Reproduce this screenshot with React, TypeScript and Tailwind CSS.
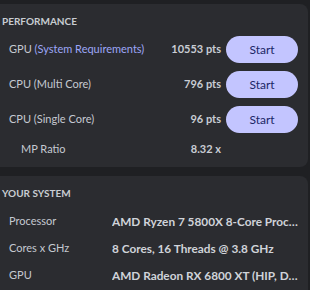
import React from "react";

const font = { fontFamily: "Lato, 'Noto Sans', sans-serif" };

function Btn() {
  return (
    <button className="ml-[5px] flex h-[27px] w-[72px] items-center justify-center rounded-full bg-[#c3c5ff] text-[12px] text-[#1c2766]">
      Start
    </button>
  );
}

function ScoreRow({ children, score }: { children: React.ReactNode; score: string }) {
  return (
    <div className="flex h-[27px] items-center">
      <div className="flex-1 pl-[9px] text-[11px] text-[#c5c9d0]">{children}</div>
      <div className="text-[11px] font-bold text-[#c9cdd4]">{score}</div>
      <Btn />
    </div>
  );
}

function SysRow({ label, value }: { label: string; value: string }) {
  return (
    <div className="flex h-[27px] items-center">
      <div className="w-[112px] shrink-0 pl-[9px] text-[11px] text-[#c5c9d0]">{label}</div>
      <div className="min-w-0 flex-1 truncate text-[11.8px] font-bold text-[#d0d3d9]">{value}</div>
    </div>
  );
}

export default function App() {
  return (
    <div className="h-[290px] w-[310px] overflow-hidden bg-[#1f2023] pt-[4px]" style={font}>
      <div className="w-[308px] rounded-r-[8px] bg-[#2b2c30] pb-[9px] pr-[10px] pt-[9px]">
        <div className="flex h-4 items-center pl-[2px] text-[10px] font-bold text-[#c8ccd2]">PERFORMANCE</div>
        <div className="mt-[7px] flex flex-col gap-[8px]">
          <ScoreRow score="10553 pts">
            GPU <span className="text-[#9da6f7]">(System Requirements)</span>
          </ScoreRow>
          <ScoreRow score="796 pts">CPU (Multi Core)</ScoreRow>
          <ScoreRow score="96 pts">CPU (Single Core)</ScoreRow>
          <div className="flex h-[17px] items-center">
            <div className="flex-1 pl-[21px] text-[11px] text-[#c5c9d0]">MP Ratio</div>
            <div className="text-[11px] font-bold text-[#c9cdd4]">8.32 x</div>
            <div className="ml-[5px] w-[72px]" />
          </div>
        </div>
      </div>
      <div className="mt-[9px] h-[140px] w-[308px] rounded-r-[8px] bg-[#2b2c30] pr-[10px] pt-[9px]">
        <div className="flex h-4 items-center pl-[2px] text-[10px] font-bold text-[#c8ccd2]">YOUR SYSTEM</div>
        <div className="mt-[7px] flex flex-col">
          <SysRow label="Processor" value="AMD Ryzen 7 5800X 8-Core Processor" />
          <SysRow label="Cores x GHz" value="8 Cores, 16 Threads @ 3.8 GHz" />
          <SysRow label="GPU" value="AMD Radeon RX 6800 XT (HIP, DirectX 12)" />
        </div>
      </div>
    </div>
  );
}
